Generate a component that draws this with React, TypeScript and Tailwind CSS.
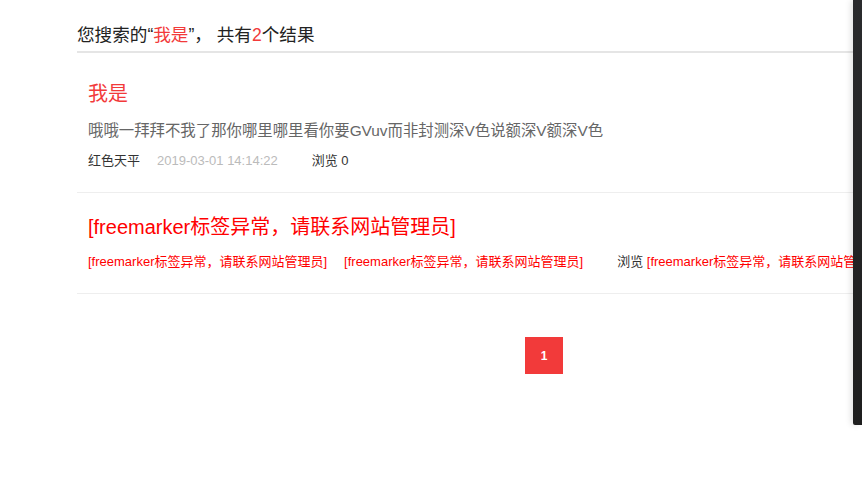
import React from 'react';

const FM = '[freemarker标签异常，请联系网站管理员]';

export default function App() {
  return (
    <div
      className="relative w-full h-[493px] overflow-hidden bg-white"
      style={{ fontFamily: '"Liberation Sans", "Noto Sans CJK SC", sans-serif' }}
    >
      <div className="ml-[77px] w-[934px] pt-[23px]">
        {/* Search header */}
        <div className="border-b-2 border-[#e5e5e5] pb-[4px]">
          <h2 className="text-[17.6px] leading-[24px] text-[#222]">
            您搜索的“<span className="text-[#f23a3a]">我是</span>”， 共有<span className="text-[#f23a3a]">2</span>个结果
          </h2>
        </div>

        {/* Result list */}
        <ul>
          <li className="border-b border-[#eee] px-[11px] pt-[28px] pb-[22px]">
            <a className="block text-[20px] leading-[26px] text-[#f23a3a]">我是</a>
            <p className="mt-[14px] text-[15.4px] leading-[20px] text-[#666]">
              哦哦一拜拜不我了那你哪里哪里看你要GVuv而非封测深V色说额深V额深V色
            </p>
            <div className="mt-[11px] flex text-[13px] leading-[18px] whitespace-nowrap">
              <span className="mr-[17px] text-[#333]">红色天平</span>
              <span className="mr-[34px] text-[#bbb]">2019-03-01 14:14:22</span>
              <span className="text-[#333]">浏览 0</span>
            </div>
          </li>
          <li className="border-b border-[#eee] px-[11px] pt-[21px] pb-[22px]">
            <a className="block text-[20px] leading-[26px] text-[#ff0000] whitespace-nowrap">{FM}</a>
            <div className="mt-[13px] flex text-[13px] leading-[18px] whitespace-nowrap">
              <span className="mr-[17px] text-[#ff0000]">{FM}</span>
              <span className="mr-[34px] text-[#ff0000]">{FM}</span>
              <span className="text-[#333]">
                浏览 <span className="text-[#ff0000]">{FM}</span>
              </span>
            </div>
          </li>
        </ul>

        {/* Pagination */}
        <div className="mt-[43px] flex justify-center">
          <span className="flex h-[37px] w-[38px] items-center justify-center bg-[#f23a3a] text-[12px] font-bold text-white">
            1
          </span>
        </div>
      </div>

      {/* Floating side bar */}
      <div className="absolute right-0 top-0 h-[425px] w-[9px] rounded-bl-[2px] bg-gradient-to-b from-[#2a2b2d] to-[#1e1e1e] shadow-[-2px_0_6px_rgba(0,0,0,0.12)]" />
    </div>
  );
}
